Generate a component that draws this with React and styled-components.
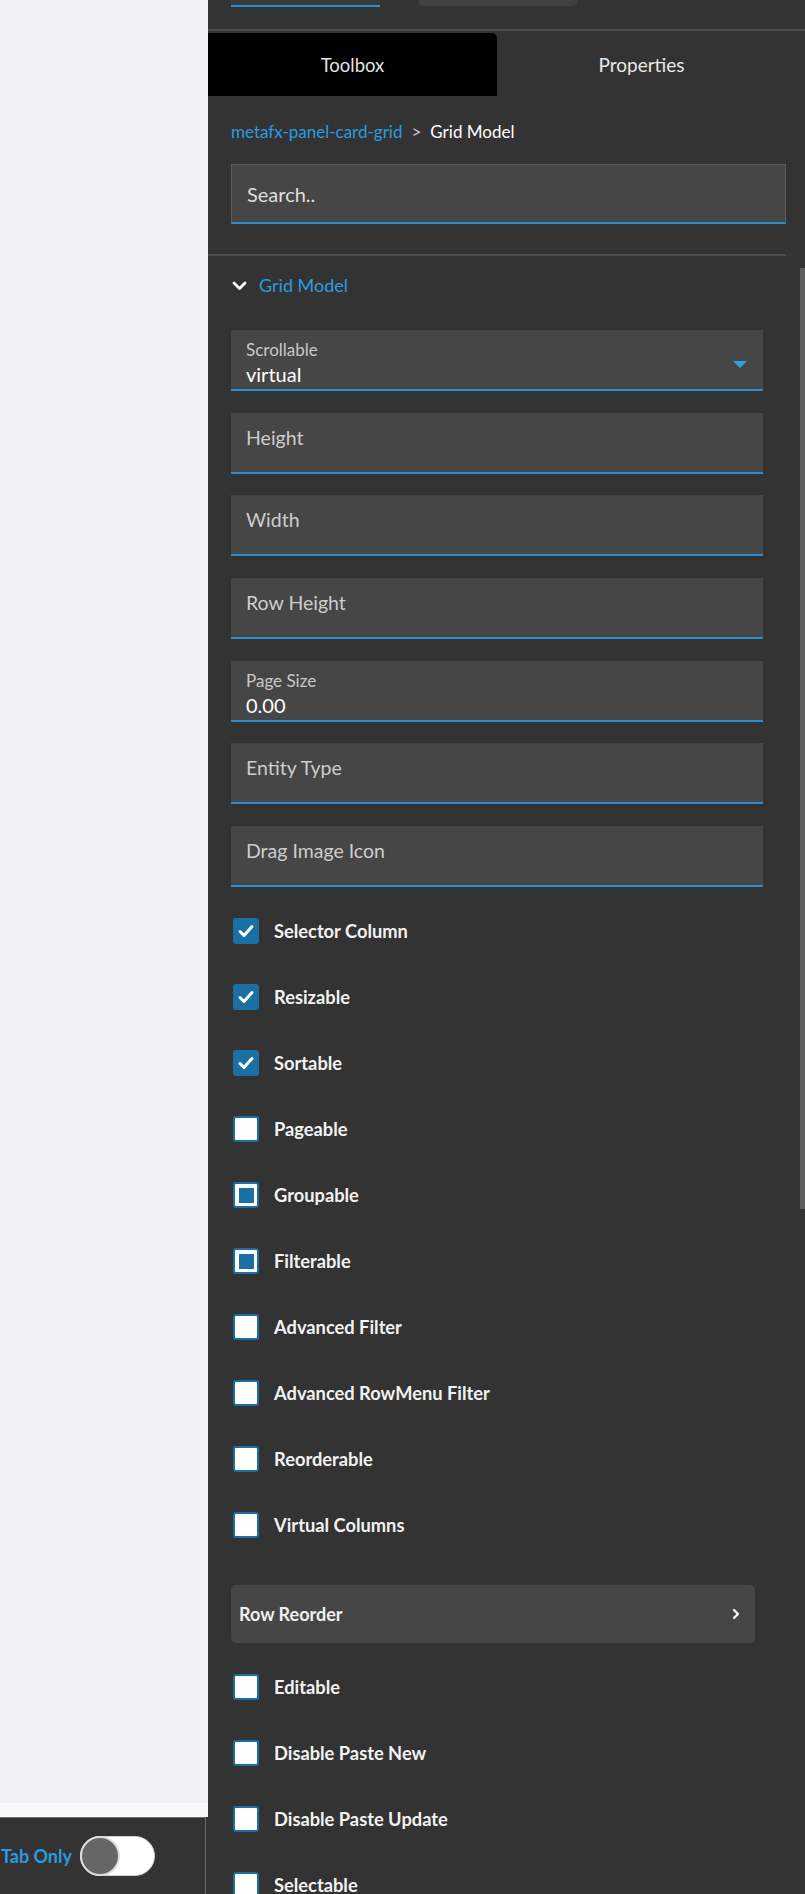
import React from 'react'
import styled, { createGlobalStyle } from 'styled-components'

const GlobalStyle = createGlobalStyle`
  html, body {
    margin: 0;
    padding: 0;
    background: #333333;
    font-family: Lato, "Liberation Sans", sans-serif;
  }
  * { box-sizing: border-box; }
`

const Page = styled.div`
  display: flex;
  height: 100vh;
  overflow: hidden;
`

const LeftColumn = styled.div`
  width: 208px;
  display: flex;
  flex-direction: column;
  background: #333333;
`

const Canvas = styled.div`
  flex: 1;
  background: #eef2f5;
  border-bottom: 14px solid #f6f8f9;
`

const BottomBar = styled.div`
  width: 206px;
  height: 77px;
  display: flex;
  align-items: center;
  justify-content: flex-end;
  gap: 8px;
  padding-right: 50px;
  overflow: hidden;
  white-space: nowrap;
  border-top: 1px solid #6e6e6e;
  border-right: 1px solid #6e6e6e;
  background: #333333;
`

const ToggleLabel = styled.span`
  color: #2a9be0;
  font-weight: 700;
  font-size: 18px;
`

const Toggle = styled.div`
  flex-shrink: 0;
  width: 75px;
  height: 40px;
  border-radius: 20px;
  background: #ffffff;
  border: 1px solid #cfcfcf;
  display: flex;
  align-items: center;
`

const Knob = styled.div`
  width: 40px;
  height: 40px;
  border-radius: 50%;
  background: #666666;
  border: 2px solid #dcdcdc;
  margin-left: -1px;
`

const Panel = styled.div`
  flex: 1;
  display: flex;
  flex-direction: column;
  background: #333333;
  min-width: 0;
`

const TopBar = styled.div`
  height: 31px;
  display: flex;
  align-items: flex-start;
  gap: 38px;
  padding-left: 23px;
  border-bottom: 2px solid #4a4a4a;
`

const TopTab = styled.div`
  width: ${p => p.$w}px;
  height: ${p => (p.$active ? 7 : 6)}px;
  background: ${p => (p.$active ? '#3a3a3a' : '#414141')};
  border-bottom: ${p => (p.$active ? '2px solid #2a8ed2' : 'none')};
  border-radius: ${p => (p.$active ? '0' : '0 0 7px 7px')};
`

const PanelTabs = styled.div`
  width: 578px;
  height: 63px;
  margin-top: 2px;
  display: flex;
`

const PanelTab = styled.div`
  flex: 1;
  display: flex;
  align-items: center;
  justify-content: center;
  font-size: ${p => (p.$active ? 18.5 : 19)}px;
  color: ${p => (p.$active ? '#e2e2e2' : '#e8e8e8')};
  background: ${p => (p.$active ? '#000000' : 'transparent')};
  border-top-right-radius: 5px;
`

const Breadcrumb = styled.div`
  margin-top: 24px;
  padding-left: 23px;
  line-height: 24px;
  font-size: 17px;
  display: flex;
  gap: 9px;
`

const CrumbLink = styled.span`
  color: #2a9be0;
`

const CrumbSep = styled.span`
  color: #cfcfcf;
`

const CrumbCurrent = styled.span`
  color: #ffffff;
`

const Search = styled.div`
  margin: 20px 19px 0 23px;
  height: 60px;
  background: #464646;
  border: 1px solid #5c5c5c;
  border-bottom: 2px solid #2a8ed2;
  display: flex;
  align-items: center;
  padding-left: 15px;
  font-size: 20px;
  color: #dedede;
`

const Divider = styled.div`
  margin-top: 30px;
  width: 578px;
  height: 2px;
  background: #4d4d4d;
`

const ScrollArea = styled.div`
  flex: 1;
  display: flex;
  min-height: 0;
`

const Content = styled.div`
  width: 578px;
  padding: 9px 0 0 23px;
`

const Track = styled.div`
  flex: 1;
  padding: 12px 0 0 14px;
`

const Thumb = styled.div`
  width: 5px;
  height: 941px;
  background: #5e5e5e;
`

const SectionHeader = styled.div`
  height: 40px;
  display: flex;
  align-items: center;
  gap: 12px;
  padding-left: 1px;
  color: #2a9be0;
  font-size: 18px;
`

const Fields = styled.div`
  margin-top: 25px;
  display: flex;
  flex-direction: column;
  gap: 21.7px;
`

const Field = styled.div`
  width: 532px;
  height: 61px;
  background: #464646;
  border-bottom: 2px solid #2a8ed2;
  display: flex;
  align-items: flex-start;
  padding: ${p => (p.$filled ? '10px' : '11px')} 16px 0 15px;
`

const FieldText = styled.div`
  flex: 1;
  display: flex;
  flex-direction: column;
`

const Placeholder = styled.div`
  font-size: 19.5px;
  line-height: 28px;
  color: #cdcdcd;
`

const SmallLabel = styled.div`
  font-size: 17px;
  line-height: 20px;
  color: #c9c9c9;
`

const Value = styled.div`
  margin-top: 2px;
  font-size: 20px;
  line-height: 25px;
  color: #ffffff;
`

const Caret = styled.div`
  margin-top: 21px;
  width: 0;
  height: 0;
  border-left: 7px solid transparent;
  border-right: 7px solid transparent;
  border-top: 7px solid #2d9fe3;
`

const CheckList = styled.div`
  margin-top: ${p => p.$top}px;
  display: flex;
  flex-direction: column;
`

const CheckRow = styled.div`
  height: 66px;
  display: flex;
  align-items: center;
  gap: 15px;
  padding-left: 2px;
`

const Box = styled.div`
  width: 26px;
  height: 26px;
  border-radius: 3px;
  display: flex;
  align-items: center;
  justify-content: center;
  background: ${p => (p.$state === 'checked' ? '#1a6fa3' : '#ffffff')};
  border: 2px solid #1a6fa3;
`

const Dot = styled.div`
  width: 15px;
  height: 15px;
  background: #1a6fa3;
`

const CheckLabel = styled.span`
  font-size: 18.3px;
  font-weight: 700;
  color: #f2f2f2;
`

const Expander = styled.div`
  margin-top: 27px;
  width: 524px;
  height: 58px;
  border-radius: 5px;
  background: #464646;
  display: flex;
  align-items: center;
  justify-content: space-between;
  padding: 0 15px 0 8px;
  font-size: 18px;
  font-weight: 700;
  color: #f0f0f0;
`

const fields = [
  { label: 'Scrollable', value: 'virtual', select: true },
  { label: 'Height' },
  { label: 'Width' },
  { label: 'Row Height' },
  { label: 'Page Size', value: '0.00' },
  { label: 'Entity Type' },
  { label: 'Drag Image Icon' },
]

const firstChecks = [
  ['Selector Column', 'checked'],
  ['Resizable', 'checked'],
  ['Sortable', 'checked'],
  ['Pageable', 'off'],
  ['Groupable', 'mixed'],
  ['Filterable', 'mixed'],
  ['Advanced Filter', 'off'],
  ['Advanced RowMenu Filter', 'off'],
  ['Reorderable', 'off'],
  ['Virtual Columns', 'off'],
]

const moreChecks = [
  ['Editable', 'off'],
  ['Disable Paste New', 'off'],
  ['Disable Paste Update', 'off'],
  ['Selectable', 'off'],
]

function Check({ label, state }) {
  return (
    <CheckRow>
      <Box $state={state}>
        {state === 'checked' && (
          <svg width="18" height="18" viewBox="0 0 18 18">
            <path d="M3 9.5l4 4 8-9" fill="none" stroke="#fff" strokeWidth="3" strokeLinecap="round" strokeLinejoin="round" />
          </svg>
        )}
        {state === 'mixed' && <Dot />}
      </Box>
      <CheckLabel>{label}</CheckLabel>
    </CheckRow>
  )
}

export default function App() {
  return (
    <Page>
      <GlobalStyle />
      <LeftColumn>
        <Canvas />
        <BottomBar>
          <ToggleLabel>Current Tab Only</ToggleLabel>
          <Toggle>
            <Knob />
          </Toggle>
        </BottomBar>
      </LeftColumn>

      <Panel>
        <TopBar>
          <TopTab $active $w={149} />
          <TopTab $w={160} />
        </TopBar>

        <PanelTabs>
          <PanelTab $active>Toolbox</PanelTab>
          <PanelTab>Properties</PanelTab>
        </PanelTabs>

        <Breadcrumb>
          <CrumbLink>metafx-panel-card-grid</CrumbLink>
          <CrumbSep>&gt;</CrumbSep>
          <CrumbCurrent>Grid Model</CrumbCurrent>
        </Breadcrumb>

        <Search>Search..</Search>
        <Divider />

        <ScrollArea>
          <Content>
            <SectionHeader>
              <svg width="15" height="11" viewBox="0 0 15 11">
                <path d="M2 3l5.5 5.5L13 3" fill="none" stroke="#fff" strokeWidth="2.8" strokeLinecap="round" strokeLinejoin="round" />
              </svg>
              Grid Model
            </SectionHeader>

            <Fields>
              {fields.map(f => (
                <Field key={f.label} $filled={!!f.value}>
                  <FieldText>
                    {f.value ? (
                      <>
                        <SmallLabel>{f.label}</SmallLabel>
                        <Value>{f.value}</Value>
                      </>
                    ) : (
                      <Placeholder>{f.label}</Placeholder>
                    )}
                  </FieldText>
                  {f.select && <Caret />}
                </Field>
              ))}
            </Fields>

            <CheckList $top={11}>
              {firstChecks.map(([l, s]) => <Check key={l} label={l} state={s} />)}
            </CheckList>

            <Expander>
              Row Reorder
              <svg width="8" height="12" viewBox="0 0 8 12">
                <path d="M2 2l4 4-4 4" fill="none" stroke="#fff" strokeWidth="2.2" strokeLinecap="round" strokeLinejoin="round" />
              </svg>
            </Expander>

            <CheckList $top={11}>
              {moreChecks.map(([l, s]) => <Check key={l} label={l} state={s} />)}
            </CheckList>
          </Content>
          <Track>
            <Thumb />
          </Track>
        </ScrollArea>
      </Panel>
    </Page>
  )
}
